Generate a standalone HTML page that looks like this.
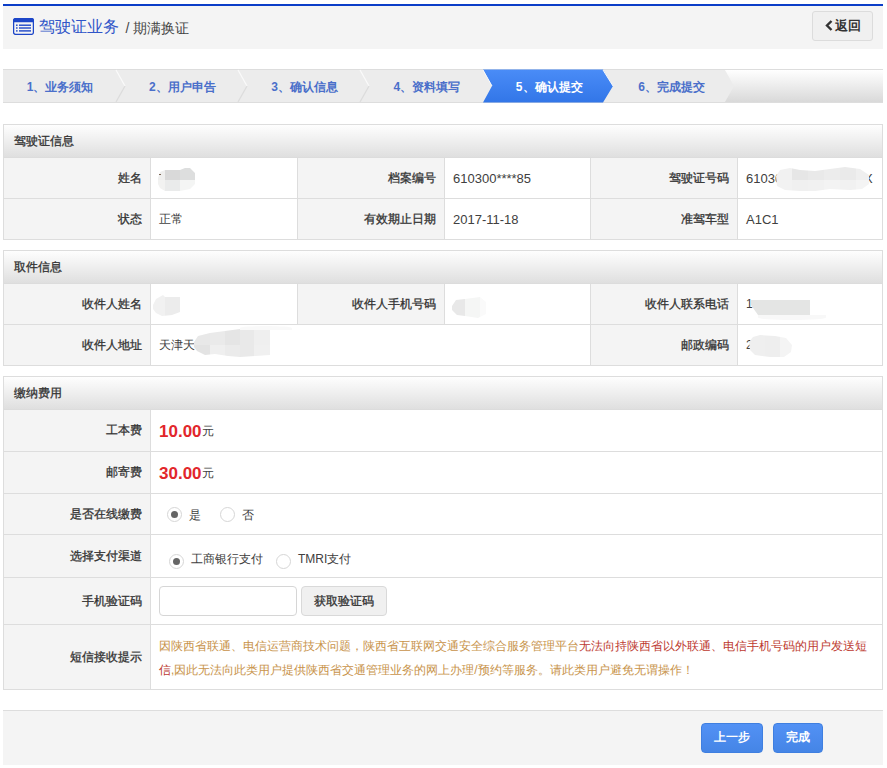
<!DOCTYPE html><html><head><meta charset="utf-8"><style>
*{margin:0;padding:0;box-sizing:border-box}
html,body{width:887px;height:768px;overflow:hidden;background:#fff}
body{position:relative;font-family:"Liberation Sans",sans-serif;font-size:12px;color:#333}
.a{position:absolute}
.hdr{left:3px;top:4px;width:880px;height:45px;border-top:2px solid #0b3ec8;background:#f4f4f4}
.ttl{left:39px;top:17px;font-size:16px;color:#2f55c8;white-space:nowrap;line-height:20px}
.ttl span{font-size:14px;color:#444;margin-left:2px;position:relative;top:1px}
.back{left:812px;top:11px;width:61px;height:30px;border:1px solid #dcdcdc;border-radius:3px;background:#f0f0f0;font-size:12.5px;font-weight:bold;color:#333;line-height:28px;text-align:center}
.pb{left:3px;width:880px;border:1px solid #ddd;background:#fff}
.ph{left:4px;width:878px;height:33px;background:linear-gradient(#fefefe,#dfdfdf);border-bottom:1px solid #dcdcdc;-webkit-text-stroke:0.3px #333;color:#333;padding-left:10px;line-height:32px}
.hl{left:4px;width:878px;height:1px;background:#ddd}
.vl{width:1px;background:#ddd}
.lbg{background:#f4f4f4}
.lb{-webkit-text-stroke:0.3px #333;text-align:right;white-space:nowrap}
.tx{white-space:nowrap;color:#404040}
.stp{left:0;top:0}
.st{font-weight:bold;color:#4a6fca;white-space:nowrap;text-align:center;width:122px;line-height:16px}
.lt{font-size:13px}
.price{color:#e2262b;font-weight:bold;font-size:17px;position:relative;top:1px}
.radio{width:15px;height:15px;border-radius:50%;border:1px solid #d6d6d6;background:#fff}
.radio.on::after{content:"";position:absolute;left:3px;top:3px;width:7px;height:7px;border-radius:50%;background:#666}
.inp{border:1px solid #d6d6d6;border-radius:4px;background:#fff}
.gbtn{border:1px solid #d9d9d9;border-radius:4px;background:#f0f0f0;-webkit-text-stroke:0.3px #333;text-align:center}
.note{color:#c8934a;white-space:nowrap;line-height:24px;margin-top:2px}
.note b{font-weight:normal;color:#bd3a30}
.ftr{left:3px;top:710px;width:880px;height:55px;border-top:1px solid #ddd;background:#f4f4f4}
.bbtn{top:723px;height:30px;border-radius:4px;background:linear-gradient(#5291f5,#4585e6);border:1px solid #3f7fe0;color:#fff;font-weight:bold;font-size:12px;text-align:center;line-height:27px}
</style></head><body>
<div class="a hdr"></div>
<svg class="a" style="left:13px;top:18px" width="21" height="17" viewBox="0 0 21 17">
<rect x="0.6" y="0.6" width="19.8" height="15.8" rx="2" fill="none" stroke="#1d46c8" stroke-width="1.3"/>
<path d="M0 2.6 Q0 0 2.6 0 H18.4 Q21 0 21 2.6 V4.2 H0 Z" fill="#1d46c8"/>
<rect x="3" y="6.5" width="1.6" height="1.4" fill="#1d46c8"/><rect x="6" y="6.5" width="12" height="1.4" fill="#1d46c8"/>
<rect x="3" y="9.3" width="1.6" height="1.4" fill="#1d46c8"/><rect x="6" y="9.3" width="12" height="1.4" fill="#1d46c8"/>
<rect x="3" y="12.2" width="1.6" height="1.4" fill="#1d46c8"/><rect x="6" y="12.2" width="12" height="1.4" fill="#1d46c8"/>
</svg>
<div class="a ttl">驾驶证业务 <span>/ 期满换证</span></div>
<div class="a back"><svg style="vertical-align:-1px;margin-right:2px" width="8" height="11" viewBox="0 0 8 11"><path d="M6.5 1 L2 5.5 L6.5 10" fill="none" stroke="#333" stroke-width="2.4"/></svg>返回</div>
<svg class="a" style="left:0;top:64px" width="887" height="44" viewBox="0 64 887 44">
<defs><linearGradient id="g1" x1="0" y1="0" x2="0" y2="1"><stop offset="0" stop-color="#ffffff"/><stop offset="1" stop-color="#d9d9d9"/></linearGradient><linearGradient id="g2" x1="0" y1="0" x2="0" y2="1"><stop offset="0" stop-color="#4a8cf7"/><stop offset="1" stop-color="#3276e8"/></linearGradient></defs>
<rect x="3" y="69" width="880" height="34" fill="#ddd"/>
<rect x="3" y="70" width="880" height="32" fill="url(#g1)"/>
<polygon points="3,70 725,70 734,86 725,102 3,102" fill="#ececec"/>
<line x1="116" y1="70" x2="125" y2="86" stroke="#fafafa" stroke-width="1.2"/>
<line x1="125" y1="86" x2="116" y2="102" stroke="#dcdcdc" stroke-width="1.2"/>
<line x1="238" y1="70" x2="247" y2="86" stroke="#fafafa" stroke-width="1.2"/>
<line x1="247" y1="86" x2="238" y2="102" stroke="#dcdcdc" stroke-width="1.2"/>
<line x1="360" y1="70" x2="369" y2="86" stroke="#fafafa" stroke-width="1.2"/>
<line x1="369" y1="86" x2="360" y2="102" stroke="#dcdcdc" stroke-width="1.2"/>
<polygon points="483,69.5 603,69.5 613,86 603,102.5 483,102.5 492,86" fill="url(#g2)"/>
<line x1="483" y1="70" x2="492" y2="86" stroke="#fafafa" stroke-width="1"/>
<line x1="603" y1="70" x2="613" y2="86" stroke="#fafafa" stroke-width="1"/>
</svg>
<div class="a st" style="left:-1.0px;top:79px;color:#4a6fca">1、业务须知</div>
<div class="a st" style="left:121.3px;top:79px;color:#4a6fca">2、用户申告</div>
<div class="a st" style="left:243.6px;top:79px;color:#4a6fca">3、确认信息</div>
<div class="a st" style="left:365.9px;top:79px;color:#4a6fca">4、资料填写</div>
<div class="a st" style="left:488.2px;top:79px;color:#fff">5、确认提交</div>
<div class="a st" style="left:610.5px;top:79px;color:#4a6fca">6、完成提交</div>
<div class="a pb" style="top:124px;height:116px"></div>
<div class="a ph" style="top:125px">驾驶证信息</div>
<div class="a lbg" style="left:4px;top:158px;width:146px;height:40px"></div>
<div class="a lb" style="right:745px;top:158px;height:40px;display:flex;align-items:center">姓名</div>
<div class="a vl" style="left:150px;top:158px;height:40px"></div>
<div class="a tx" style="left:159px;top:158px;height:40px;display:flex;align-items:center"></div>
<div class="a vl" style="left:297px;top:158px;height:40px"></div>
<div class="a lbg" style="left:298px;top:158px;width:146px;height:40px"></div>
<div class="a lb" style="right:451px;top:158px;height:40px;display:flex;align-items:center">档案编号</div>
<div class="a vl" style="left:444px;top:158px;height:40px"></div>
<div class="a tx" style="left:453px;top:158px;height:40px;display:flex;align-items:center"><span class="lt">610300****85</span></div>
<div class="a vl" style="left:590px;top:158px;height:40px"></div>
<div class="a lbg" style="left:591px;top:158px;width:146px;height:40px"></div>
<div class="a lb" style="right:158px;top:158px;height:40px;display:flex;align-items:center">驾驶证号码</div>
<div class="a vl" style="left:737px;top:158px;height:40px"></div>
<div class="a tx" style="left:746px;top:158px;height:40px;display:flex;align-items:center"><span class="lt">61030</span></div>
<div class="a hl" style="top:198px"></div>
<div class="a lbg" style="left:4px;top:199px;width:146px;height:40px"></div>
<div class="a lb" style="right:745px;top:199px;height:40px;display:flex;align-items:center">状态</div>
<div class="a vl" style="left:150px;top:199px;height:40px"></div>
<div class="a tx" style="left:159px;top:199px;height:40px;display:flex;align-items:center">正常</div>
<div class="a vl" style="left:297px;top:199px;height:40px"></div>
<div class="a lbg" style="left:298px;top:199px;width:146px;height:40px"></div>
<div class="a lb" style="right:451px;top:199px;height:40px;display:flex;align-items:center">有效期止日期</div>
<div class="a vl" style="left:444px;top:199px;height:40px"></div>
<div class="a tx" style="left:453px;top:199px;height:40px;display:flex;align-items:center"><span class="lt">2017-11-18</span></div>
<div class="a vl" style="left:590px;top:199px;height:40px"></div>
<div class="a lbg" style="left:591px;top:199px;width:146px;height:40px"></div>
<div class="a lb" style="right:158px;top:199px;height:40px;display:flex;align-items:center">准驾车型</div>
<div class="a vl" style="left:737px;top:199px;height:40px"></div>
<div class="a tx" style="left:746px;top:199px;height:40px;display:flex;align-items:center"><span class="lt">A1C1</span></div>
<div class="a pb" style="top:250px;height:116px"></div>
<div class="a ph" style="top:251px">取件信息</div>
<div class="a lbg" style="left:4px;top:284px;width:146px;height:40px"></div>
<div class="a lb" style="right:745px;top:284px;height:40px;display:flex;align-items:center">收件人姓名</div>
<div class="a vl" style="left:150px;top:284px;height:40px"></div>
<div class="a tx" style="left:159px;top:284px;height:40px;display:flex;align-items:center"></div>
<div class="a vl" style="left:297px;top:284px;height:40px"></div>
<div class="a lbg" style="left:298px;top:284px;width:146px;height:40px"></div>
<div class="a lb" style="right:451px;top:284px;height:40px;display:flex;align-items:center">收件人手机号码</div>
<div class="a vl" style="left:444px;top:284px;height:40px"></div>
<div class="a tx" style="left:453px;top:284px;height:40px;display:flex;align-items:center"></div>
<div class="a vl" style="left:590px;top:284px;height:40px"></div>
<div class="a lbg" style="left:591px;top:284px;width:146px;height:40px"></div>
<div class="a lb" style="right:158px;top:284px;height:40px;display:flex;align-items:center">收件人联系电话</div>
<div class="a vl" style="left:737px;top:284px;height:40px"></div>
<div class="a tx" style="left:746px;top:284px;height:40px;display:flex;align-items:center">1</div>
<div class="a hl" style="top:324px"></div>
<div class="a lbg" style="left:4px;top:325px;width:146px;height:40px"></div>
<div class="a lb" style="right:745px;top:325px;height:40px;display:flex;align-items:center">收件人地址</div>
<div class="a vl" style="left:150px;top:325px;height:40px"></div>
<div class="a tx" style="left:159px;top:325px;height:40px;display:flex;align-items:center">天津天</div>
<div class="a vl" style="left:590px;top:325px;height:40px"></div>
<div class="a lbg" style="left:591px;top:325px;width:146px;height:40px"></div>
<div class="a lb" style="right:158px;top:325px;height:40px;display:flex;align-items:center">邮政编码</div>
<div class="a vl" style="left:737px;top:325px;height:40px"></div>
<div class="a tx" style="left:746px;top:325px;height:40px;display:flex;align-items:center">2</div>
<div class="a pb" style="top:376px;height:314px"></div>
<div class="a ph" style="top:377px">缴纳费用</div>
<div class="a lbg" style="left:4px;top:410px;width:146px;height:41px"></div>
<div class="a lb" style="right:745px;top:410px;height:41px;display:flex;align-items:center">工本费</div>
<div class="a vl" style="left:150px;top:410px;height:41px"></div>
<div class="a tx" style="left:159px;top:410px;height:41px;display:flex;align-items:center"><span class="price">10.00</span><span style="font-size:12px;position:relative;top:1px;margin-left:0">元</span></div>
<div class="a hl" style="top:451px"></div>
<div class="a lbg" style="left:4px;top:452px;width:146px;height:41px"></div>
<div class="a lb" style="right:745px;top:452px;height:41px;display:flex;align-items:center">邮寄费</div>
<div class="a vl" style="left:150px;top:452px;height:41px"></div>
<div class="a tx" style="left:159px;top:452px;height:41px;display:flex;align-items:center"><span class="price">30.00</span><span style="font-size:12px;position:relative;top:1px;margin-left:0">元</span></div>
<div class="a hl" style="top:493px"></div>
<div class="a lbg" style="left:4px;top:494px;width:146px;height:40px"></div>
<div class="a lb" style="right:745px;top:494px;height:40px;display:flex;align-items:center">是否在线缴费</div>
<div class="a vl" style="left:150px;top:494px;height:40px"></div>
<div class="a tx" style="left:159px;top:494px;height:40px;display:flex;align-items:center"></div>
<div class="a hl" style="top:534px"></div>
<div class="a lbg" style="left:4px;top:535px;width:146px;height:42px"></div>
<div class="a lb" style="right:745px;top:535px;height:42px;display:flex;align-items:center">选择支付渠道</div>
<div class="a vl" style="left:150px;top:535px;height:42px"></div>
<div class="a tx" style="left:159px;top:535px;height:42px;display:flex;align-items:center"></div>
<div class="a hl" style="top:577px"></div>
<div class="a lbg" style="left:4px;top:578px;width:146px;height:46px"></div>
<div class="a lb" style="right:745px;top:578px;height:46px;display:flex;align-items:center">手机验证码</div>
<div class="a vl" style="left:150px;top:578px;height:46px"></div>
<div class="a tx" style="left:159px;top:578px;height:46px;display:flex;align-items:center"></div>
<div class="a hl" style="top:624px"></div>
<div class="a lbg" style="left:4px;top:625px;width:146px;height:64px"></div>
<div class="a lb" style="right:745px;top:625px;height:64px;display:flex;align-items:center">短信接收提示</div>
<div class="a vl" style="left:150px;top:625px;height:64px"></div>
<div class="a tx" style="left:159px;top:625px;height:64px;display:flex;align-items:center"><div class="note">因陕西省联通、电信运营商技术问题，陕西省互联网交通安全综合服务管理平台<b>无法向持陕西省以外联通、电信手机号码的用户发送短<br>信</b>,因此无法向此类用户提供陕西省交通管理业务的网上办理/预约等服务。请此类用户避免无谓操作！</div></div>
<div class="a radio on" style="left:167px;top:507px"></div><div class="a tx" style="left:189px;top:507px;font-size:12px">是</div>
<div class="a radio" style="left:220px;top:507px"></div><div class="a tx" style="left:242px;top:507px;font-size:12px">否</div>
<div class="a radio on" style="left:169px;top:554px"></div><div class="a tx" style="left:191px;top:551px;font-size:12px">工商银行支付</div>
<div class="a radio" style="left:276px;top:554px"></div><div class="a tx" style="left:298px;top:551px;font-size:12px">TMRI支付</div>
<div class="a inp" style="left:159px;top:586px;width:138px;height:30px"></div>
<div class="a gbtn" style="left:301px;top:586px;width:86px;height:30px;line-height:28px">获取验证码</div>
<div class="a" style="left:158px;top:168px;width:37px;height:23px;overflow:hidden;clip-path:polygon(0px 10px,2px 4px,7px 2px,22px 2px,27px 0px,32px 0px,37px 5px,37px 16px,32px 21px,22px 23px,7px 23px,2px 20px,0px 16px);"><div class="a" style="left:0px;top:0px;width:7px;height:12px;background:#efefee"></div><div class="a" style="left:7px;top:0px;width:15px;height:12px;background:#d9d9d9"></div><div class="a" style="left:22px;top:0px;width:15px;height:12px;background:#dddede"></div><div class="a" style="left:0px;top:12px;width:7px;height:11px;background:#f2f2f1"></div><div class="a" style="left:7px;top:12px;width:15px;height:11px;background:#eaebeb"></div><div class="a" style="left:22px;top:12px;width:15px;height:11px;background:#f4f5f4"></div></div>
<div class="a" style="left:159px;top:174px;width:2px;height:1px;background:#7a6452"></div>
<div class="a tx lt" style="left:864px;top:171px;font-size:13px">X</div>
<div class="a" style="left:776px;top:167px;width:93px;height:24px;overflow:hidden;clip-path:polygon(0px 9px,4px 3px,14px 1px,24px 3px,39px 4px,54px 2px,69px 0px,84px 2px,93px 8px,93px 17px,86px 22px,74px 23px,54px 22px,39px 24px,24px 24px,9px 23px,1px 19px);"><div class="a" style="left:0px;top:0px;width:16px;height:13px;background:#f1f1f1"></div><div class="a" style="left:16px;top:0px;width:16px;height:13px;background:#e6e6e6"></div><div class="a" style="left:32px;top:0px;width:16px;height:13px;background:#e9e9e9"></div><div class="a" style="left:48px;top:0px;width:16px;height:13px;background:#ececec"></div><div class="a" style="left:64px;top:0px;width:16px;height:13px;background:#eaeaea"></div><div class="a" style="left:80px;top:0px;width:13px;height:13px;background:#efefef"></div><div class="a" style="left:0px;top:13px;width:16px;height:11px;background:#f2f2f2"></div><div class="a" style="left:16px;top:13px;width:16px;height:11px;background:#f0f0f0"></div><div class="a" style="left:32px;top:13px;width:16px;height:11px;background:#f1f1f1"></div><div class="a" style="left:48px;top:13px;width:16px;height:11px;background:#f3f3f3"></div><div class="a" style="left:64px;top:13px;width:16px;height:11px;background:#f1f1f1"></div><div class="a" style="left:80px;top:13px;width:13px;height:11px;background:#f4f4f4"></div></div>
<div class="a" style="left:153px;top:295px;width:27px;height:21px;overflow:hidden;clip-path:polygon(0px 10px,3px 4px,10px 0px,12px 2px,27px 2px,27px 17px,19px 20px,9px 21px,3px 18px,0px 14px);"><div class="a" style="left:0px;top:0px;width:12px;height:21px;background:#f1f1f1"></div><div class="a" style="left:12px;top:0px;width:15px;height:21px;background:#ececec"></div></div>
<div class="a" style="left:452px;top:297px;width:34px;height:21px;overflow:hidden;clip-path:polygon(0px 9px,4px 3px,13px 2px,28px 0px,34px 5px,34px 17px,26px 21px,13px 19px,5px 18px,0px 13px);"><div class="a" style="left:0px;top:0px;width:13px;height:21px;background:#e8e8e8"></div><div class="a" style="left:13px;top:0px;width:15px;height:21px;background:#f5f6f5"></div><div class="a" style="left:28px;top:0px;width:6px;height:21px;background:#fafafa"></div></div>
<div class="a" style="left:751px;top:300px;width:59px;height:15px;overflow:hidden;clip-path:polygon(0px 0px,59px 0px,59px 15px,7px 15px,0px 5px);"><div class="a" style="left:0px;top:0px;width:59px;height:15px;background:#e4e5e4"></div></div>
<div class="a" style="left:758px;top:315px;width:68px;height:5px;background:#f8f8f8;border-radius:0 0 50% 50%"></div>
<div class="a" style="left:194px;top:329px;width:76px;height:28px;overflow:hidden;clip-path:polygon(0px 13px,4px 7px,16px 4px,31px 2px,46px 0px,76px 0px,76px 26px,61px 27px,46px 28px,34px 27px,21px 25px,11px 26px,3px 22px,0px 18px);"><div class="a" style="left:0px;top:0px;width:16px;height:16px;background:#e8e8e8"></div><div class="a" style="left:16px;top:0px;width:15px;height:16px;background:#eaeaea"></div><div class="a" style="left:31px;top:0px;width:15px;height:16px;background:#e5e5e5"></div><div class="a" style="left:46px;top:0px;width:14px;height:16px;background:#e9e9e9"></div><div class="a" style="left:60px;top:0px;width:16px;height:16px;background:#efefef"></div><div class="a" style="left:0px;top:16px;width:16px;height:12px;background:#e3e3e3"></div><div class="a" style="left:16px;top:16px;width:15px;height:12px;background:#efefef"></div><div class="a" style="left:31px;top:16px;width:15px;height:12px;background:#ebebeb"></div><div class="a" style="left:46px;top:16px;width:14px;height:12px;background:#e9e9e9"></div><div class="a" style="left:60px;top:16px;width:16px;height:12px;background:#f0f0f0"></div></div>
<div class="a" style="left:240px;top:326px;width:52px;height:4px;background:#f9f9f9;border-radius:50% 50% 0 0"></div>
<div class="a" style="left:749px;top:335px;width:43px;height:22px;overflow:hidden;clip-path:polygon(0px 7px,4px 2px,11px 0px,26px 1px,37px 3px,43px 10px,42px 17px,35px 22px,21px 22px,6px 20px,1px 15px);"><div class="a" style="left:0px;top:0px;width:16px;height:22px;background:#efefef"></div><div class="a" style="left:16px;top:0px;width:15px;height:22px;background:#eeeeee"></div><div class="a" style="left:31px;top:0px;width:12px;height:22px;background:#f4f4f4"></div></div>
<div class="a ftr"></div>
<div class="a bbtn" style="left:701px;width:62px">上一步</div>
<div class="a bbtn" style="left:773px;width:50px">完成</div>
</body></html>
